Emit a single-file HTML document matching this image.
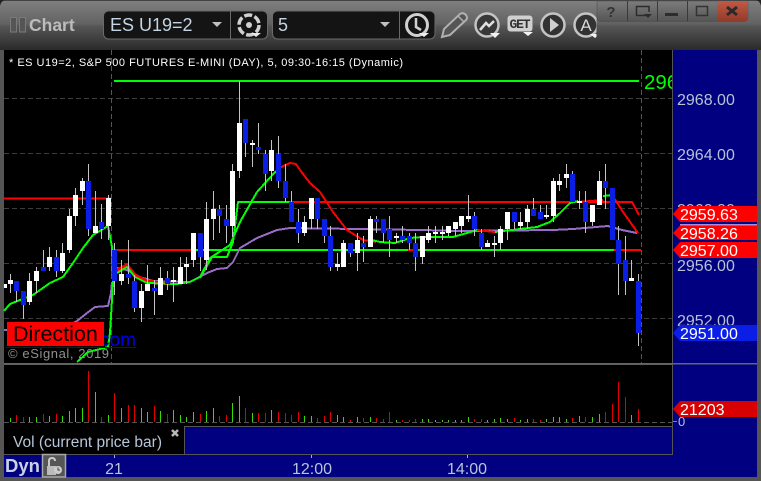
<!DOCTYPE html>
<html><head><meta charset="utf-8"><style>
html,body{margin:0;padding:0;background:#000;width:761px;height:481px;overflow:hidden}
svg{display:block}
text{font-family:"Liberation Sans",sans-serif}
</style></head><body>
<svg id="s" xmlns="http://www.w3.org/2000/svg" width="761" height="481" viewBox="0 0 761 481">
<defs>
<linearGradient id="tb" x1="0" y1="0" x2="0" y2="1"><stop offset="0" stop-color="#808080"/><stop offset=".48" stop-color="#626262"/><stop offset=".52" stop-color="#565656"/><stop offset="1" stop-color="#2a2a2a"/></linearGradient>
<linearGradient id="wb" x1="0" y1="0" x2="0" y2="1"><stop offset="0" stop-color="#7c7c7c"/><stop offset="1" stop-color="#555"/></linearGradient>
<linearGradient id="xb" x1="0" y1="0" x2="0" y2="1"><stop offset="0" stop-color="#c05a46"/><stop offset="1" stop-color="#943a28"/></linearGradient>
<clipPath id="ic"><rect x="440" y="0" width="156.500" height="50"/></clipPath>
<clipPath id="gc"><rect x="640" y="60" width="32" height="40"/></clipPath>
</defs>
<rect width="761" height="481" fill="#555"/>
<rect width="761" height="50" fill="url(#tb)"/>
<rect x="0" y="0" width="761" height="1" fill="#444"/>
<path d="M0 0H5Q1 1 0 6Z" fill="#222"/>
<path d="M761 0H756Q760 1 761 6Z" fill="#222"/>
<rect x="4" y="50" width="668" height="313" fill="#000"/>
<rect x="673" y="50" width="84" height="427" fill="#000080"/>
<rect x="672" y="50" width="1" height="405" fill="#555"/>
<rect x="4" y="363" width="753" height="1.500" fill="#666"/>
<rect x="4" y="365" width="668" height="61" fill="#000"/>
<rect x="4" y="426" width="180" height="28" fill="#000"/>
<rect x="185" y="427" width="487" height="27" fill="#000080"/>
<rect x="184" y="426" width="488" height="1" fill="#555"/>
<rect x="184" y="426" width="1" height="28" fill="#555"/>
<rect x="4" y="454" width="669" height="1" fill="#555"/>
<rect x="4" y="455" width="753" height="22" fill="#000080"/>

<g stroke="#3e3e3e" stroke-width="1" stroke-dasharray="5 3" fill="none" shape-rendering="crispEdges">
<path d="M4 98.500H672M4 153.500H672M4 208.500H672M4 263.500H672M4 318.500H672"/>
<path d="M4 422.500H672" stroke="#555"/>
<path d="M111.500 50V363M641.500 50V363" stroke="#555"/>
</g>

<rect x="114" y="80" width="525" height="2" fill="#00ff00"/>
<text x="644" y="89" font-size="20.500" fill="#00ff00" clip-path="url(#gc)">296</text>
<text x="9" y="66" font-size="11" fill="#fff" textLength="394" lengthAdjust="spacing">* ES U19=2, S&amp;P 500 FUTURES E-MINI (DAY), 5, 09:30-16:15 (Dynamic)</text>

<g id="lines" fill="none" stroke-linejoin="round" shape-rendering="crispEdges">
<path d="M4 198.500H111" stroke="#ff0000" stroke-width="2"/>
<path d="M112 250H193" stroke="#ff0000" stroke-width="2"/>
<path d="M193 250H638" stroke="#00ff00" stroke-width="2"/>
<path d="M408 250H416M614 250H641" stroke="#ff0000" stroke-width="2"/>
<path d="M290 202H632L639 215" stroke="#ff0000" stroke-width="2"/>
<path d="M200 278L212 257H227L233 242L238 202H290" stroke="#00ff00" stroke-width="2"/>
<path d="M4 330L70 325L77 321L87 313L95 307L108 306L111 293L112 282" stroke="#9a6cc8" stroke-width="2"/>
<path d="M117 268L127 270L140 277L153 281L190 282L207 273L217 269L227 268L233 262L240 248L257 238L277 230L290 228L422 230L460 231L553 230L573 229L608 226L622 230L637 233" stroke="#9a6cc8" stroke-width="2"/>
<path d="M117 270L127 265L135 275L147 281L170 284" stroke="#ff0000" stroke-width="3"/>
<path d="M276 171L283 166L290 163L296 164L300 170L310 183L320 192L333 212L347 230L363 240L376 242" stroke="#ff0000" stroke-width="2"/>
<path d="M4 311L10 304L20 300L33 295L50 283L63 277L73 263L83 248L93 235L108 226L112 247L113 283L110 333L108 347L88 352L77 362" stroke="#00ff00" stroke-width="2"/>
<path d="M117 273L127 267L135 277L147 283L177 284L190 282L200 277L210 258L230 245L240 222L257 192L276 171" stroke="#00ff00" stroke-width="2"/>
<path d="M372 240L380 242L395 243L410 238L423 237L453 237L467 233L477 230" stroke="#00ff00" stroke-width="2"/>
<path d="M477 230L495 232" stroke="#ff0000" stroke-width="2"/>
<path d="M495 232L537 227L550 222L560 213L570 203L578 201" stroke="#00ff00" stroke-width="2"/>
<path d="M578 202L603 200" stroke="#ff0000" stroke-width="2"/>
<path d="M603 196L612 195" stroke="#00ff00" stroke-width="2"/>
<path d="M612 195L623 212L638 233" stroke="#ff0000" stroke-width="2"/>
</g>
<g id="candles" shape-rendering="crispEdges"></g>
<g id="vol" shape-rendering="crispEdges"></g>

<text x="136" y="346" font-size="19" fill="#0000e0" text-anchor="end">.com</text>
<rect x="6" y="347" width="130" height="1" fill="#0000e0"/>
<rect x="7" y="322" width="97" height="24" fill="#ff0000"/>
<text x="13" y="341" font-size="21.500" fill="#000">Direction</text>
<text x="8" y="358" font-size="13" fill="#8f8f8f" textLength="101">© eSignal, 2019</text>

<g font-size="16" fill="#b6c2d4">
<text x="677" y="105">2968.00</text>
<text x="677" y="160">2964.00</text>
<text x="677" y="215">2960.00</text>
<text x="677" y="271">2956.00</text>
<text x="677" y="326">2952.00</text>
<text x="678" y="426" font-size="13">0</text>
</g>
<rect x="673" y="421" width="4" height="1" fill="#888"/>
<path d="M673 214L680 206H757V222H680Z" fill="#ff0000"/>
<rect x="680" y="224" width="77" height="1.500" fill="#b08ad8"/>
<path d="M673 233L680 225.500H757V240H680Z" fill="#ff0000"/>
<path d="M673 250L680 242H757V258H680Z" fill="#ff0000"/>
<path d="M673 333L680 325H757V341H680Z" fill="#0a1ee6"/>
<path d="M673 409L680 401H757V417H680Z" fill="#d80000"/>
<g font-size="16" fill="#fff">
<text x="680" y="220">2959.63</text>
<text x="680" y="239">2958.26</text>
<text x="680" y="256">2957.00</text>
<text x="680" y="339">2951.00</text>
<text x="680" y="415">21203</text>
</g>

<text x="13" y="447" font-size="15.500" fill="#b6c6d8" textLength="149">Vol (current price bar)</text>
<path d="M172 430L178 436M178 430L172 436" stroke="#b8b8b8" stroke-width="2.500"/>

<text x="5" y="472" font-size="18.500" font-weight="bold" fill="#c8d2e4">Dyn</text>
<rect x="42.500" y="454.500" width="23" height="22.500" fill="#555" stroke="#a8a8a8" stroke-width="1.500"/>
<rect x="47" y="466" width="9" height="9" fill="#bbb"/>
<path d="M49 466V461Q49 458 52 458Q55 458 55 461" fill="none" stroke="#c8c8c8" stroke-width="2"/>
<circle cx="58" cy="470" r="4" fill="#ccc"/><path d="M58 467.500V470H60" stroke="#444" fill="none"/>
<rect x="114" y="455" width="1" height="3" fill="#aab"/><rect x="311" y="455" width="1" height="3" fill="#aab"/><rect x="467" y="455" width="1" height="3" fill="#aab"/>
<g font-size="16" fill="#b6c6dc" text-anchor="middle">
<text x="114" y="474">21</text>
<text x="312" y="474">12:00</text>
<text x="467" y="474">14:00</text>
</g>

<!-- title bar -->
<rect x="10.500" y="17.500" width="6" height="14.500" fill="#555" stroke="#7a7a7a"/>
<rect x="19.500" y="17.500" width="6" height="14.500" fill="#555" stroke="#7a7a7a"/>
<text x="29" y="31" font-size="17.500" font-weight="bold" fill="#bcbcbc">Chart</text>

<rect x="103.500" y="11" width="164" height="28" rx="5" fill="#141414" stroke="#6a6a6a"/>
<rect x="230" y="11" width="1" height="28" fill="#6a6a6a"/>
<text x="110" y="31" font-size="18" fill="#c4d4e4">ES U19=2</text>
<path d="M212 22H222L217 27Z" fill="#c0c0c0"/>
<circle cx="249" cy="25" r="10" fill="none" stroke="#d0d0d0" stroke-width="3.500" stroke-dasharray="8 2.500"/>
<circle cx="249" cy="25" r="3" fill="#d0d0d0"/>
<path d="M251 33H261L256 37Z" fill="#e8e8e8"/>

<rect x="272.500" y="11" width="162.500" height="28" rx="5" fill="#141414" stroke="#6a6a6a"/>
<rect x="399" y="11" width="1" height="28" fill="#6a6a6a"/>
<text x="278" y="31" font-size="18" fill="#c4d4e4">5</text>
<path d="M380 22H390L385 27Z" fill="#c0c0c0"/>
<circle cx="417" cy="25" r="10.500" fill="none" stroke="#d0d0d0" stroke-width="3"/>
<path d="M416 18V27L421 30" fill="none" stroke="#d0d0d0" stroke-width="2.500"/>
<path d="M419 33H429L424 37Z" fill="#eee"/>

<g clip-path="url(#ic)">
<path d="M442 37L444 29L460 14Q463 12 466 15Q468 18 466 20L450 35Z" fill="#555" stroke="#b0b0b0" stroke-width="2"/>
<path d="M458 16L464 22" stroke="#b0b0b0" stroke-width="1.500"/>
<circle cx="487" cy="25" r="11.500" fill="#383838" stroke="#c4c4c4" stroke-width="2.500"/>
<path d="M480 30L486 23L489 26L494 21" fill="none" stroke="#e0e0e0" stroke-width="2.500"/>
<path d="M490 33H500L495 38Z" fill="#f2f2f2"/>
<rect x="507.500" y="15.500" width="25" height="16" rx="3" fill="#d0d0d0"/>
<text x="520" y="28" font-size="13" font-weight="bold" fill="#333" text-anchor="middle" style="font-family:'Liberation Mono',monospace" textLength="21">GET</text>
<path d="M523 32H533L528 36Z" fill="#f2f2f2"/>
<circle cx="553" cy="25" r="11.500" fill="#333" stroke="#c4c4c4" stroke-width="2.500"/>
<path d="M550 18L559 25L550 32Z" fill="#d0d0d0"/>
<circle cx="586" cy="25" r="11.500" fill="#333" stroke="#c4c4c4" stroke-width="2.500"/>
<text x="586" y="31" font-size="17" fill="#d8d8d8" text-anchor="middle">A</text>
<path d="M590 34H600L595 38Z" fill="#f2f2f2"/>
</g>

<path d="M597 1H748V17Q748 21.500 744 21.500H601Q597 21.500 597 17Z" fill="url(#wb)" stroke="#4a4a4a" stroke-width=".5"/>
<rect x="627" y="1" width="1" height="20" fill="#3a3a3a"/>
<rect x="657" y="1" width="1" height="20" fill="#3a3a3a"/>
<rect x="687" y="1" width="1" height="20" fill="#3a3a3a"/>
<path d="M717 1H748V17Q748 21.500 744 21.500H717Z" fill="url(#xb)"/>
<text x="611" y="17" font-size="15" font-weight="bold" fill="#333" text-anchor="middle">?</text>
<path d="M647 15.500H636.500V6.500H649V12" fill="none" stroke="#2c2c2c" stroke-width="1.500"/>
<path d="M644 14H652L648 18Z" fill="#2c2c2c"/>
<rect x="665" y="13" width="13" height="3" fill="#2c2c2c"/>
<rect x="696.500" y="6.500" width="11" height="9" fill="none" stroke="#333" stroke-width="1.500"/>
<path d="M727 7L737 15M737 7L727 15" stroke="#2a2a2a" stroke-width="3"/>
</svg>
<script>
var c=[
['w',280,284,274,293],['b',281,291,281,302],['b',291,305,291,319],['w',281,302,273,305],['w',271,281,267,293],['b',267,271,250,271],['w',257,267,247,271],['b',257,271,250,277],['w',253,271,243,273],['w',216,250,209,253],
['w',195,216,188,226],['w',181,191,178,205],['b',181,229,164,236],['w',226,233,191,233],['b',222,229,204,239],['w',198,226,195,240],['b',250,281,243,295],['w',274,281,260,285],['b',274,278,240,284],['b',281,308,275,312],
['w',291,308,284,322],['w',284,291,265,291],['b',288,291,280,315],['w',278,295,267,295],['b',278,284,271,290],['w',280,282,267,302],['w',267,284,257,284],['w',264,267,257,284],['w',233,260,233,267],['b',233,257,233,271],
['w',219,260,202,270],['w',209,219,191,240],['b',209,216,205,233],['b',219,226,205,243],['w',171,226,164,237],['w',123,171,81,178],['b',119,143,119,157],['w',143,145,140,167],['b',147,150,123,154],['b',154,174,150,191],
['w',150,171,140,181],['b',154,181,136,188],['b',181,198,164,202],['b',202,222,191,222],['b',222,233,209,243],['w',222,233,216,236],['w',198,219,198,229],['b',198,219,198,229],['b',219,236,219,243],['b',236,267,226,271],
['w',264,267,253,271],['w',243,267,240,267],['b',243,253,243,257],['w',240,253,233,271],['b',243,247,236,262],['w',219,247,216,247],['b',219,222,216,233],['b',219,233,219,243],['b',229,240,216,257],['w',236,238,233,243],
['b',236,240,226,243],['b',236,243,233,250],['b',243,257,233,271],['w',236,257,236,264],['w',233,240,226,243],['w',232,234,226,243],['w',232,234,226,240],['w',226,233,226,236],['w',222,229,222,236],['w',216,226,216,233],
['w',216,219,195,222],['b',216,229,212,236],['b',233,247,229,250],['w',243,247,240,247],['w',243,245,236,257],['w',229,243,226,250],['w',212,229,212,240],['b',212,222,212,229],['w',222,226,212,229],['w',209,222,205,229],
['b',209,216,198,216],['b',212,219,205,219],['w',215,217,205,219],['w',181,216,178,222],['w',181,185,174,191],['w',174,178,164,188],['b',174,202,171,202],['w',201,203,191,209],['b',202,222,191,233],['w',205,222,205,226],
['w',181,205,171,205],['b',181,188,164,209],['b',188,240,188,240],['b',240,264,226,295],['b',260,281,236,295],['w',278,281,260,281],['b',281,333,274,346]];
var v=[174,165,171,171,171,162,168,162,168,153,144,144,33,96,171,165,99,144,135,135,144,156,138,153,162,150,165,171,156,162,153,144,168,165,129,108,144,159,159,159,150,156,159,165,156,168,168,174,168,156,165,171,180,171,174,171,174,
177,156,180,180,180,177,177,177,180,180,180,180,180,171,177,177,180,177,174,177,174,180,177,177,180,177,171,171,177,174,168,171,171,162,156,132,66,111,165,147];
var h='',g='';
function R(x,y,w,hh,f){return '<rect x="'+x+'" y="'+y+'" width="'+w+'" height="'+hh+'" fill="'+f+'"/>';}
h+=R(4,284,3,4,'#fff');
for(var i=0;i<97;i++){var d=c[i],col=Math.floor(10.3+6.542*i),t=d[0]=='w';
 h+=R(col,d[3],1,d[4]-d[3],'#c4c4c4');
 h+=R(col-2,d[1],5,d[2]-d[1],t?'#ffffff':'#0a1ee6');
 var y=Math.round(360+v[i]/3);
 g+=R(col,y,1,422-y,t?'#33dd00':'#e00000');
}
document.getElementById('candles').innerHTML=h;
document.getElementById('vol').innerHTML=g;
</script>
</body></html>
